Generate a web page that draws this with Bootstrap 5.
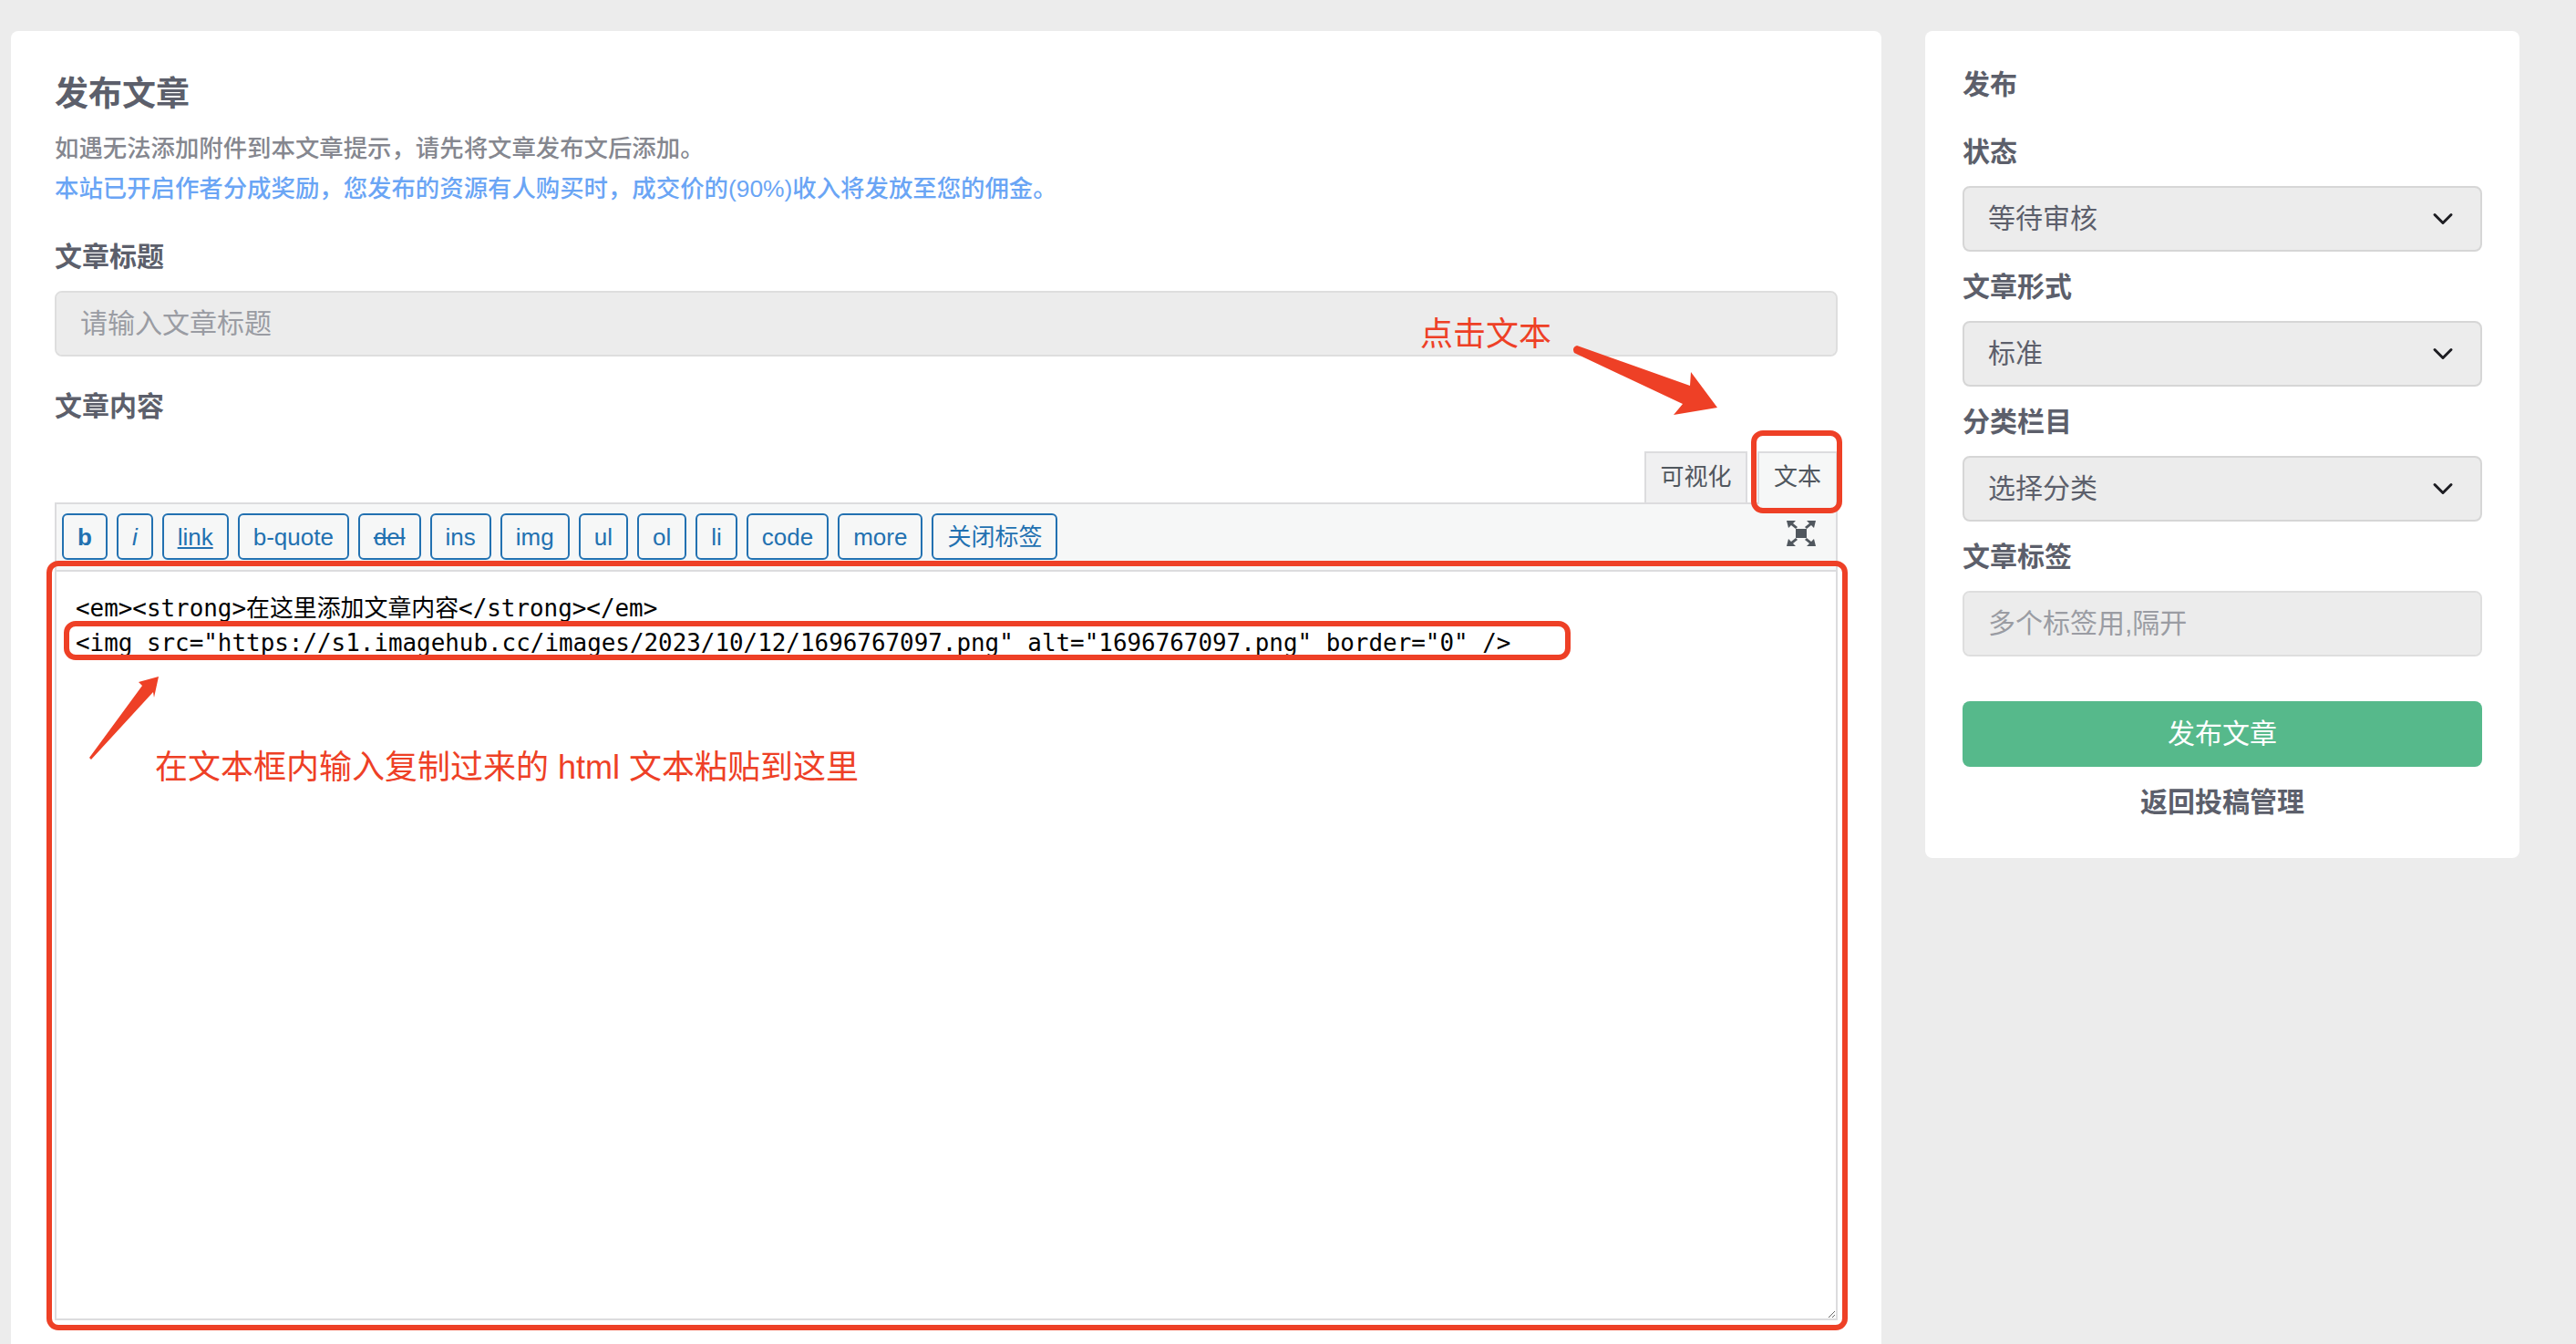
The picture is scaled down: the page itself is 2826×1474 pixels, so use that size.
<!DOCTYPE html>
<html lang="zh-CN">
<head>
<meta charset="utf-8">
<title>发布文章</title>
<link href="https://cdn.jsdelivr.net/npm/bootstrap@5.3.0/dist/css/bootstrap.min.css" rel="stylesheet">
<style>
html,body{height:100%;overflow:hidden}
body{background:#ececec;font-family:"Liberation Sans","Noto Sans CJK SC",sans-serif;color:#5c5f6b;position:relative}
.page-wrap{padding:34px 0 0 12px;gap:48px;width:2826px}
.main-panel{width:2052px;flex:none;background:#fff;border:0;border-radius:8px;padding:52px 48px 48px}
.side-panel{width:652px;flex:none;background:#fff;border:0;border-radius:8px;padding:44px 41px 46px 41px}
.page-title{font-size:37px;line-height:36px;font-weight:700;margin:0 0 19px;color:#5c5f6b}
.tip-line{font-size:26.4px;line-height:44px;margin:0;font-weight:500;color:#85878f}
.tip-blue{color:#6aa5f5}
.field-label{display:block;font-size:30px;line-height:30px;font-weight:700;color:#5c5f6b;margin:0 0 22px}
.field-input.form-control,.field-input.form-select{height:72px;border:2px solid #dedede;border-radius:8px;background-color:#ececec;font-size:30px;line-height:36px;padding:0 26px;color:#5c5f6b;box-shadow:none}
.field-input.form-select{border-color:#d6d6d6;background-size:24px 24px;background-position:right 29px center;background-image:url("data:image/svg+xml,%3csvg xmlns='http://www.w3.org/2000/svg' viewBox='0 0 16 16'%3e%3cpath fill='none' stroke='%231d1d22' stroke-linecap='round' stroke-linejoin='round' stroke-width='2' d='m2 5 6 6 6-6'/%3e%3c/svg%3e")}
.field-input::placeholder{color:#9a9ca3;opacity:1}
.field-gap{margin-bottom:24px}
.title-field{margin:38px 0 40px}
.side-title{font-size:30px;line-height:30px;font-weight:700;margin:0 0 44px;color:#5c5f6b}
.publish-btn.btn{display:block;width:100%;height:72px;margin-top:49px;background:#56b98b;border:0;border-radius:8px;color:#fff;font-size:30px;line-height:72px;padding:0}
.back-link{display:block;text-align:center;margin-top:24px;font-size:30px;line-height:30px;font-weight:700;color:#5c5f6b;text-decoration:none}
.tab-row{margin-top:34px;gap:11px;height:56px;position:relative;z-index:1}
.editor-tab{border:2px solid #dcdcde;border-bottom:0;background:#f0f0f1;font-size:26px;line-height:52px;color:#50575e;text-align:center}
.tab-visual{width:113px;height:56px}
.tab-text{width:88px;height:58px;background:#f6f7f7}
.editor-bar{height:74px;background:#f6f7f7;border:2px solid #dcdcde;border-bottom:0;padding:10px 22px 0 6px;gap:10px}
.qt-btn.btn{height:51px;padding:0 15px;background:#f6f7f7;border:2px solid #2271b1;border-radius:6px;color:#2271b1;font-size:26px;line-height:46px;font-family:"Liberation Sans","Noto Sans CJK SC",sans-serif}
.qt-link{text-decoration:underline}
.qt-del{text-decoration:line-through}
.editor-area.form-control{display:block;width:100%;height:823px;border:2px solid #dcdcde;border-radius:0;padding:22px 21px;font-family:"DejaVu Sans Mono","Noto Sans CJK SC",monospace;font-size:25.9px;line-height:37.5px;color:#000;white-space:pre;box-shadow:none;background:#fff}
.mark-layer{position:absolute;left:0;top:0;width:2826px;height:1474px;pointer-events:none;z-index:5}
.mark-box{position:absolute;border:6px solid #ee4026;border-radius:13px;z-index:5}
.box-tab{left:1921px;top:472px;width:100px;height:91px}
.box-editor{left:51px;top:615px;width:1976px;height:844px}
.box-line{left:70px;top:681px;width:1653px;height:43px}
.mark-text{position:absolute;color:#ee4026;font-size:36px;line-height:44px;white-space:nowrap;z-index:5}
.text-click{left:1558px;top:345px}
.text-paste{left:170px;top:820px}
</style>
</head>
<body>
<div class="d-flex align-items-start page-wrap">
  <div class="card main-panel">
    <h1 class="page-title">发布文章</h1>
    <p class="tip-line">如遇无法添加附件到本文章提示，请先将文章发布文后添加。</p>
    <p class="tip-line tip-blue">本站已开启作者分成奖励，您发布的资源有人购买时，成交价的(90%)收入将发放至您的佣金。</p>
    <div class="title-field">
      <label class="field-label" for="postTitle">文章标题</label>
      <input id="postTitle" class="form-control field-input" type="text" placeholder="请输入文章标题">
    </div>
    <label class="field-label m-0" for="postBody">文章内容</label>
    <div class="d-flex justify-content-end tab-row">
      <div class="editor-tab tab-visual">可视化</div>
      <div class="editor-tab tab-text">文本</div>
    </div>
    <div class="d-flex align-items-start editor-bar">
      <button type="button" class="btn qt-btn fw-bold">b</button>
      <button type="button" class="btn qt-btn fst-italic">i</button>
      <button type="button" class="btn qt-btn qt-link">link</button>
      <button type="button" class="btn qt-btn">b-quote</button>
      <button type="button" class="btn qt-btn qt-del">del</button>
      <button type="button" class="btn qt-btn">ins</button>
      <button type="button" class="btn qt-btn">img</button>
      <button type="button" class="btn qt-btn">ul</button>
      <button type="button" class="btn qt-btn">ol</button>
      <button type="button" class="btn qt-btn">li</button>
      <button type="button" class="btn qt-btn">code</button>
      <button type="button" class="btn qt-btn">more</button>
      <button type="button" class="btn qt-btn">关闭标签</button>
      <svg class="ms-auto mt-2" width="32" height="28" viewBox="0 0 32 28" fill="#50575e" aria-hidden="true">
        <rect x="10" y="9" width="12" height="10"/>
        <path d="M0 0h10l-3 3 5 4-2 2-5-4-3 3zM32 0H22l3 3-5 4 2 2 5-4 3 3zM0 28h10l-3-3 5-4-2-2-5 4-3-3zM32 28H22l3-3-5-4 2-2 5 4 3-3z"/>
      </svg>
    </div>
    <textarea id="postBody" class="form-control editor-area" readonly>&lt;em&gt;&lt;strong&gt;在这里添加文章内容&lt;/strong&gt;&lt;/em&gt;
&lt;img src="https://s1.imagehub.cc/images/2023/10/12/1696767097.png" alt="1696767097.png" border="0" /&gt;</textarea>
  </div>
  <aside class="card side-panel">
    <h2 class="side-title">发布</h2>
    <div class="field-gap">
      <label class="field-label">状态</label>
      <select class="form-select field-input"><option>等待审核</option></select>
    </div>
    <div class="field-gap">
      <label class="field-label">文章形式</label>
      <select class="form-select field-input"><option>标准</option></select>
    </div>
    <div class="field-gap">
      <label class="field-label">分类栏目</label>
      <select class="form-select field-input"><option>选择分类</option></select>
    </div>
    <div>
      <label class="field-label">文章标签</label>
      <input class="form-control field-input" type="text" placeholder="多个标签用,隔开">
    </div>
    <button type="button" class="btn publish-btn">发布文章</button>
    <a class="back-link" href="#">返回投稿管理</a>
  </aside>
</div>
<div class="mark-box box-tab"></div>
<div class="mark-box box-editor"></div>
<div class="mark-box box-line"></div>
<span class="mark-text text-click">点击文本</span>
<span class="mark-text text-paste">在文本框内输入复制过来的 html 文本粘贴到这里</span>
<svg class="mark-layer" viewBox="0 0 2826 1474" aria-hidden="true">
  <path fill="#ee4026" d="M1730 379 1854 423 1855 408 1884 447 1836 455 1846 443 1727 387Q1724 381 1730 379Z"/>
  <path fill="#ee4026" d="M98 831 156 752 152 748 174 742 169 765 168 759 100 833Z"/>
</svg>
<script src="https://cdn.jsdelivr.net/npm/bootstrap@5.3.0/dist/js/bootstrap.bundle.min.js"></script>
</body>
</html>
